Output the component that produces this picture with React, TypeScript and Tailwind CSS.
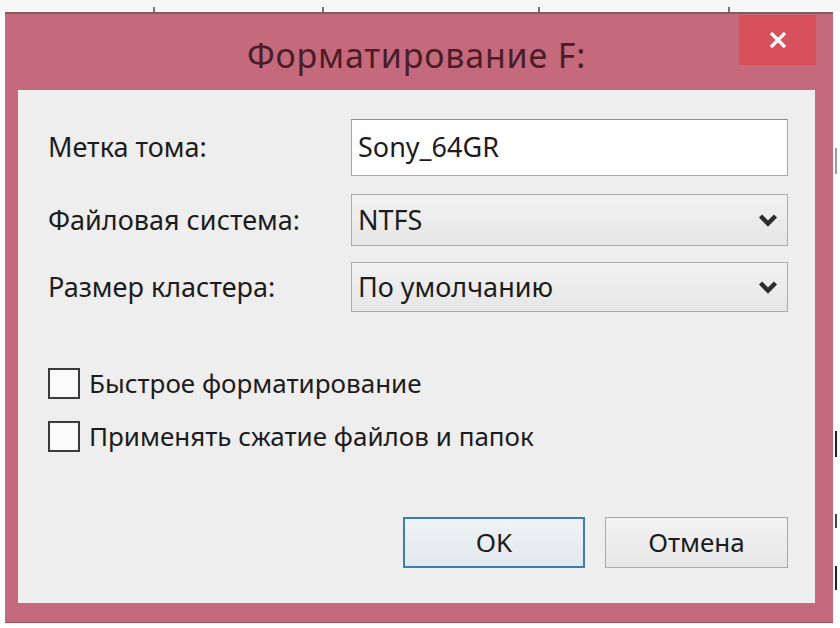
const font = { fontFamily: '"Noto Sans", "Liberation Sans", sans-serif' };

function Chevron() {
  return (
    <svg width="20" height="16" viewBox="0 0 20 16" className="shrink-0">
      <path d="M2.5 4 L10 11.5 L17.5 4" fill="none" stroke="#2e2e2e" strokeWidth="4.5" strokeLinejoin="miter" />
    </svg>
  );
}

function Combo({ value }: { value: string }) {
  return (
    <div className="flex-1 h-full flex items-center justify-between pl-[6px] pr-[9px] border border-[#acacac] bg-gradient-to-b from-[#f2f2f2] to-[#e6e6e6]">
      <span>{value}</span>
      <Chevron />
    </div>
  );
}

function Check({ label }: { label: string }) {
  return (
    <div className="flex items-center h-[32px]">
      <div className="w-[32px] h-[31px] border-2 border-[#3a3a3a] bg-[#fbfbfb]" />
      <span className="ml-[9px] text-[26px]">{label}</span>
    </div>
  );
}

export default function App() {
  return (
    <div className="w-[840px] h-[628px] bg-white flex flex-col overflow-hidden text-[#1c1c1c]" style={font}>
      {/* page behind the dialog */}
      <div className="h-[12px] flex items-end bg-[#f7f7f7]">
        <div className="ml-[153px] w-[2px] h-[5px] bg-[#777]" />
        <div className="ml-[167px] w-[2px] h-[5px] bg-[#777]" />
        <div className="ml-[214px] w-[2px] h-[5px] bg-[#777]" />
        <div className="ml-[188px] w-[2px] h-[5px] bg-[#777]" />
      </div>

      <div className="flex">
        <div className="ml-[5px] w-[828px] h-[611px] flex flex-col bg-[#c56a7c] border-t-2 border-[#7d5c62] border-b border-b-[#9a4a5b] pl-[13px] pr-[18px] pb-[19px]">
          {/* title bar */}
          <div className="relative h-[76px] flex items-center justify-center">
            <span className="text-[34px] text-[#4a1d27] tracking-[0.8px] mt-[6px]">Форматирование F:</span>
            <div className="absolute top-[1px] -right-[1px] w-[77px] h-[50px] bg-[#d8505a] flex items-center justify-center">
              <svg width="22" height="22" viewBox="0 0 22 22">
                <path d="M4 4 L18 18 M18 4 L4 18" stroke="#fff" strokeWidth="3.2" />
              </svg>
            </div>
          </div>

          {/* client area */}
          <div className="flex-1 bg-[#efeeee] border-l border-b border-[#f6eeee] pt-[29px] pl-[29px] pr-[27px] text-[27px]">
            <div className="flex items-center h-[57px]">
              <span className="w-[303px]">Метка тома:</span>
              <div className="flex-1 h-full flex items-center pl-[6px] bg-white border border-[#a8a8a8] border-t-[#8c8c8c]">
                Sony_64GR
              </div>
            </div>
            <div className="flex items-center h-[52px] mt-[18px]">
              <span className="w-[303px]">Файловая система:</span>
              <Combo value="NTFS" />
            </div>
            <div className="flex items-center h-[50px] mt-[16px]">
              <span className="w-[303px]">Размер кластера:</span>
              <Combo value="По умолчанию" />
            </div>

            <div className="mt-[55px] flex flex-col gap-[21px]">
              <Check label="Быстрое форматирование" />
              <Check label="Применять сжатие файлов и папок" />
            </div>

            <div className="flex justify-end gap-[20px] mt-[65px]">
              <button className="w-[182px] h-[51px] border-2 border-[#3d7eb0] bg-gradient-to-b from-[#eef3f7] to-[#e2e8ee] text-[26px]">
                OK
              </button>
              <button className="w-[183px] h-[51px] border border-[#a9a9a9] bg-gradient-to-b from-[#f3f3f3] to-[#e6e6e6] text-[26px]">
                Отмена
              </button>
            </div>
          </div>
        </div>

        {/* scraps of the page on the right */}
        <div className="ml-[2px] flex flex-col">
          <div className="mt-[136px] w-[2px] h-[26px] bg-[#9a9a9a]" />
          <div className="mt-[257px] w-[2px] h-[26px] bg-[#222]" />
          <div className="mt-[57px] w-[2px] h-[14px] bg-[#444]" />
          <div className="mt-[38px] w-[2px] h-[24px] bg-[#222]" />
        </div>
      </div>
    </div>
  );
}
